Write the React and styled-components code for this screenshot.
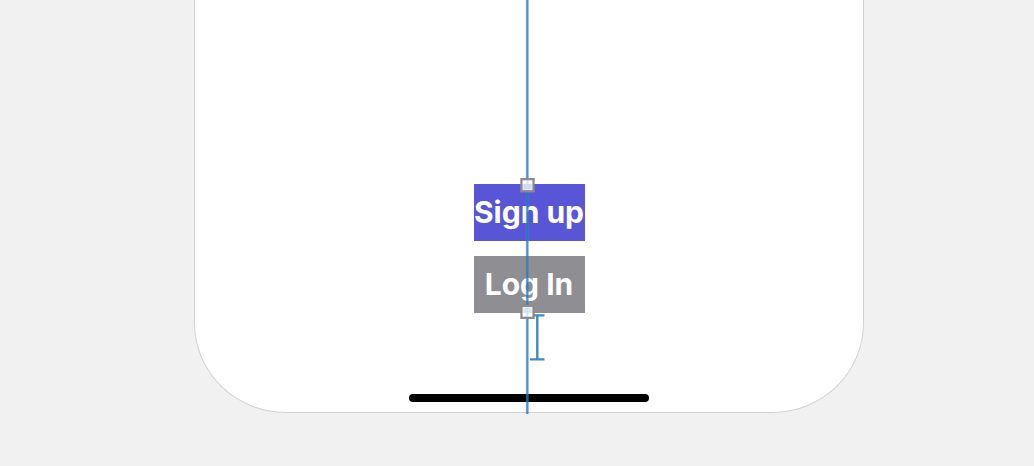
import React from "react";
import styled, { createGlobalStyle } from "styled-components";

const GlobalStyle = createGlobalStyle`
  *, *::before, *::after { box-sizing: border-box; }
  body {
    margin: 0;
    background: #f1f1f1;
    font-family: Inter, "Liberation Sans", sans-serif;
  }
`;

const Canvas = styled.main`
  padding: 0 170px 53px 194px;
`;

const Screen = styled.section`
  position: relative;
  display: flex;
  flex-direction: column;
  align-items: center;
  padding: 184px 0 10px;
  background: #fff;
  border: 1px solid #d2d2d2;
  border-top: 0;
  border-radius: 0 0 92px 92px / 0 0 90px 90px;
`;

const Actions = styled.div`
  display: grid;
  grid-template-columns: 111px;
  gap: 15px;
`;

const ActionButton = styled.button`
  display: flex;
  align-items: center;
  justify-content: center;
  height: 57px;
  padding: 0 0 2px;
  border: 0;
  background: ${({ $tone }) => ($tone === "primary" ? "#5856d6" : "#8e8e93")};
  color: #fff;
  font-family: inherit;
  font-size: 30px;
  font-weight: 700;
  line-height: 40px;
  white-space: nowrap;
`;

const HomeIndicator = styled.div`
  width: 240px;
  height: 8px;
  margin-top: 81px;
  border-radius: 4px;
  background: #000;
`;

const Guides = styled.svg`
  position: absolute;
  top: 0;
  left: calc(50% - 12px);
  width: 32px;
  height: 414px;
  pointer-events: none;
`;

const Handle = ({ y }) => (
  <g>
    <rect x="4.5" y={y} width="12" height="12" fill="#fff" fillOpacity="0.76" stroke="#8b8b8d" strokeWidth="2.4" />
    <rect x="6" y={y + 1.5} width="9" height="9" fill="none" stroke="#fff" strokeOpacity="0.4" />
  </g>
);

export default function App() {
  return (
    <>
      <GlobalStyle />
      <Canvas>
        <Screen>
          <Actions>
            <ActionButton type="button" $tone="primary">Sign up</ActionButton>
            <ActionButton type="button">Log In</ActionButton>
          </Actions>
          <HomeIndicator />
          <Guides viewBox="0 0 32 414" aria-hidden="true">
            <path d="M10.3 0V414" stroke="#4a90cc" strokeOpacity="0.3" strokeWidth="3.4" />
            <path d="M10.3 0V414" stroke="#2277bd" strokeOpacity="0.75" strokeWidth="2" />
            <path d="M17 315.4H27.5M13 359.4H27.5M20.3 315V359" fill="none" stroke="#3d8acb" strokeWidth="2.4" />
            <Handle y={179.2} />
            <Handle y={305.8} />
          </Guides>
        </Screen>
      </Canvas>
    </>
  );
}
